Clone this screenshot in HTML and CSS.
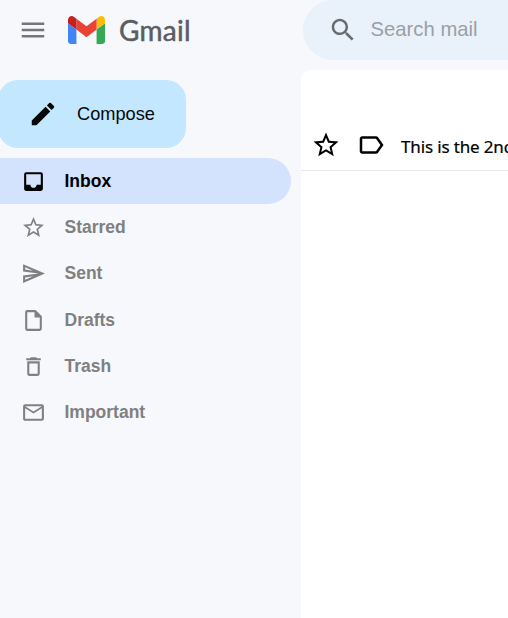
FILE: index.html
```html
<!DOCTYPE html>
<html lang="en">
<head>
<meta charset="utf-8">
<title>Gmail</title>
<link rel="stylesheet" href="styles.css">
</head>
<body>
<header class="header">
  <div class="brand">
    <svg class="icon menu" viewBox="0 0 24 24"><path d="M3 18h18v-2H3v2zm0-5h18v-2H3v2zm0-7v2h18V6H3z"/></svg>
    <svg class="logo" viewBox="52 42 88 66"><path fill="#4285f4" d="M58 108h14V74L52 59v43c0 3.32 2.69 6 6 6"/><path fill="#34a853" d="M120 108h14c3.32 0 6-2.69 6-6V59l-20 15"/><path fill="#fbbc04" d="M120 48v26l20-15v-8c0-7.42-8.47-11.65-14.4-7.2"/><path fill="#ea4335" d="M72 74V48l24 18 24-18v26L96 92"/><path fill="#c5221f" d="M52 51v8l20 15V48l-5.6-4.2c-5.94-4.45-14.4-.22-14.4 7.2"/></svg>
    <span class="wordmark">Gmail</span>
  </div>
  <div class="search">
    <svg class="icon search-icon" viewBox="0 0 24 24"><path d="M15.5 14h-.79l-.28-.27C15.41 12.59 16 11.11 16 9.5 16 5.91 13.09 3 9.5 3S3 5.91 3 9.5 5.91 16 9.5 16c1.61 0 3.09-.59 4.23-1.57l.27.28v.79l5 4.99L20.49 19l-4.99-5zm-6 0C7.01 14 5 11.99 5 9.5S7.01 5 9.5 5 14 7.01 14 9.5 11.99 14 9.5 14z"/></svg>
    <span class="placeholder">Search mail</span>
  </div>
</header>
<div class="layout">
  <aside class="sidebar">
    <div class="compose">
      <svg class="icon" viewBox="0 0 24 24"><path d="M3 17.25V21h3.75L17.81 9.94l-3.75-3.75L3 17.25zM20.71 7.04c.39-.39.39-1.02 0-1.41l-2.34-2.34a1 1 0 0 0-1.41 0l-1.83 1.83 3.75 3.75 1.83-1.83z"/></svg>
      <span>Compose</span>
    </div>
    <nav class="nav">
      <a class="item active"><svg viewBox="0 0 24 24"><path d="M19 3H5a2 2 0 0 0-2 2v14c0 1.1.9 2 2 2h14a2 2 0 0 0 2-2V5a2 2 0 0 0-2-2zm0 12h-4c0 1.66-1.35 3-3 3s-3-1.34-3-3H5V5h14v10z"/></svg><span>Inbox</span></a>
      <a class="item"><svg viewBox="0 0 24 24"><path d="M22 9.24l-7.19-.62L12 2 9.19 8.63 2 9.24l5.46 4.73L5.82 21 12 17.27 18.18 21l-1.63-7.03L22 9.24zM12 15.4l-3.76 2.27 1-4.28-3.32-2.88 4.38-.38L12 6.1l1.71 4.04 4.38.38-3.32 2.88 1 4.28L12 15.4z"/></svg><span>Starred</span></a>
      <a class="item"><svg viewBox="0 0 24 24"><path d="M4.01 6.03l7.51 3.22-7.52-1 .01-2.22m7.5 8.72L4 17.97v-2.22l7.51-1M2.01 3L2 10l15 2-15 2 .01 7L23 12 2.01 3z"/></svg><span>Sent</span></a>
      <a class="item"><svg viewBox="0 0 24 24"><path d="M14 2H6a2 2 0 0 0-2 2v16c0 1.1.9 2 2 2h12a2 2 0 0 0 2-2V8l-6-6zM6 20V4h7v5h5v11H6z"/></svg><span>Drafts</span></a>
      <a class="item"><svg viewBox="0 0 24 24"><path d="M6 19c0 1.1.9 2 2 2h8a2 2 0 0 0 2-2V7H6v12zM8 9h8v10H8V9zm7.5-5l-1-1h-5l-1 1H5v2h14V4h-3.5z"/></svg><span>Trash</span></a>
      <a class="item"><svg viewBox="0 0 24 24"><path d="M22 6c0-1.1-.9-2-2-2H4a2 2 0 0 0-2 2v12c0 1.1.9 2 2 2h16a2 2 0 0 0 2-2V6zm-2 0l-8 5-8-5h16zm0 12H4V8l8 5 8-5v10z"/></svg><span>Important</span></a>
    </nav>
  </aside>
  <main class="mail">
    <div class="row">
      <svg class="icon" viewBox="0 0 24 24"><path d="M22 9.24l-7.19-.62L12 2 9.19 8.63 2 9.24l5.46 4.73L5.82 21 12 17.27 18.18 21l-1.63-7.03L22 9.24zM12 15.4l-3.76 2.27 1-4.28-3.32-2.88 4.38-.38L12 6.1l1.71 4.04 4.38.38-3.32 2.88 1 4.28L12 15.4z"/></svg>
      <svg class="icon" viewBox="0 0 24 24"><path d="M17.63 5.84A2 2 0 0 0 16 5L5 5.01C3.9 5.01 3 5.9 3 7v10c0 1.1.9 1.99 2 1.99L16 19c.67 0 1.27-.33 1.63-.84L22 12l-4.37-6.16zM16 17H5V7h11l3.55 5L16 17z"/></svg>
      <span class="subject">This is the 2nd</span>
    </div>
  </main>
</div>
</body>
</html>
```
FILE: styles.css
```css
* { box-sizing: border-box; }
body {
  margin: 0;
  height: 618px;
  overflow: hidden;
  background: #f6f8fc;
  font-family: "Liberation Sans", Arial, sans-serif;
}
svg { display: block; flex: none; fill: currentColor; }
.icon { width: 30px; height: 30px; }
.header { display: flex; height: 60px; }
.brand { display: flex; align-items: center; width: 303px; flex: none; padding-left: 18px; }
.menu { color: #747679; }
.logo { width: 37px; height: 28px; margin-left: 20px; }
.wordmark {
  margin-left: 14px;
  font: 400 28px/34px Lato, sans-serif;
  letter-spacing: 0.3px;
  color: #5b5d60;
  -webkit-text-stroke: 0.5px #5b5d60;
}
.search {
  display: flex;
  align-items: center;
  flex: 1;
  padding-left: 25px;
  border-radius: 40px 0 0 40px;
  background: #e9f1fb;
  white-space: nowrap;
}
.search-icon { color: #696c6f; }
.placeholder {
  margin-left: 12.5px;
  padding-bottom: 2px;
  font-size: 20.3px;
  line-height: 24px;
  color: #9b9fa5;
}
.layout { display: flex; height: 558px; }
.sidebar { width: 301px; flex: none; padding-top: 20px; }
.compose {
  display: flex;
  align-items: center;
  gap: 19px;
  width: 188px;
  height: 68px;
  margin-left: -2px;
  padding-left: 30px;
  border-radius: 20px;
  background: #c2e7ff;
  color: #080808;
  font-size: 18.2px;
}
.nav { padding: 10px 10px 0 0; }
.item {
  display: flex;
  align-items: center;
  gap: 18.5px;
  height: 46.3px;
  padding-left: 21px;
  border-radius: 0 23px 23px 0;
  color: #808080;
  font-size: 17.5px;
  font-weight: 700;
}
.item svg { width: 25px; height: 25px; }
.active { background: #d3e3fd; color: #000; }
.mail {
  flex: 1;
  min-width: 0;
  margin-top: 10px;
  padding-top: 50px;
  border-top-left-radius: 10px;
  background: #fff;
}
.row {
  display: flex;
  align-items: center;
  gap: 15px;
  height: 51px;
  padding-left: 10px;
  border-bottom: 1px solid #e6e8ec;
  white-space: nowrap;
  overflow: hidden;
}
.subject {
  padding-top: 3px;
  font: 400 17px/24px "Noto Sans", sans-serif;
  letter-spacing: -0.15px;
  -webkit-text-stroke: 0.2px #000;
  color: #000;
}
```
